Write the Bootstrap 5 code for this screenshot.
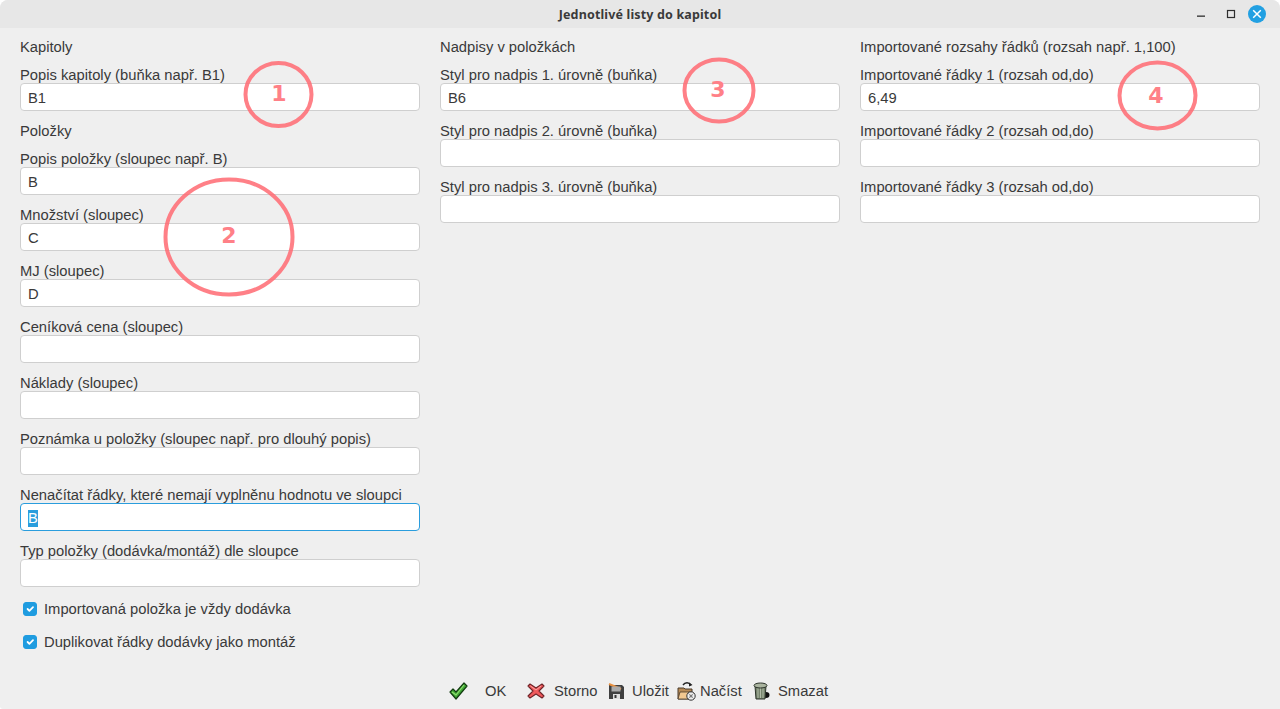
<!DOCTYPE html>
<html lang="cs">
<head>
<meta charset="utf-8">
<title>Jednotlivé listy do kapitol</title>
<link href="https://cdn.jsdelivr.net/npm/bootstrap@5.3.0/dist/css/bootstrap.min.css" rel="stylesheet">
<style>
html,body{height:709px;overflow:hidden;background:#fff}
body{font-family:"Liberation Sans",Arial,sans-serif;font-size:14.76px;color:#3a3a3a;line-height:16px}
.win{height:709px;background:#efefef;border-top-right-radius:8px;border-top-left-radius:8px;border-bottom-left-radius:3px;overflow:hidden;position:relative}
.tbar{height:28px;background:#e7e7e7;position:relative}
.ttl{font-family:"Noto Sans",sans-serif;font-weight:700;font-size:12.5px;line-height:30px;color:#3a3a3a;letter-spacing:.15px}
.ctl{position:absolute;top:0;right:0;height:28px}
.form-wrap{padding:11px 20px 0;flex:1 1 auto}
.form-row{--bs-gutter-x:20px;--bs-gutter-y:0}
.cap{height:16px;line-height:16px;white-space:nowrap;display:block;margin:0}
.fld{margin-bottom:12px}
.inp.form-control{height:28px;min-height:28px;padding:1px 7px 0;font-size:14.76px;line-height:26px;border:1px solid #cfcfcf;border-radius:4px;color:#3a3a3a;background:#fff;box-shadow:none;display:block}
.inp.foc{border-color:#2a9ddd;padding-top:0}
.sel{background:#2a9ddd;color:#fff;display:inline-block;line-height:17px;height:17px;vertical-align:top;margin-top:6px}
.chk{display:flex;align-items:center;min-height:16px;margin:0;padding:0 0 0 3px;gap:7px}
.chk .form-check-input{width:14px;height:14px;margin:0;float:none;border-radius:3px;background-color:#1f9ce0;border-color:#1f9ce0;flex:none}
.chk-a{margin-top:14px}
.chk-b{margin-top:17px}
.fbar{height:38px;display:flex;align-items:center;padding-left:449px;padding-top:2px;position:absolute;left:0;right:0;bottom:0}
.fbtn{display:flex;align-items:center;white-space:nowrap}
.fbtn svg{display:block;flex:none}
.ring{position:absolute;pointer-events:none}
.ring-n{position:absolute;font-family:"DejaVu Sans",sans-serif;font-weight:700;font-size:22px;line-height:24px;color:#ff8087;transform:translate(-50%,-50%)}
</style>
</head>
<body>
<div class="win d-flex flex-column">
  <div class="tbar text-center">
    <div class="ttl">Jednotlivé listy do kapitol</div>
    <svg class="ctl" width="100" height="28" viewBox="0 0 100 28">
      <rect x="17" y="15.5" width="8" height="1.3" fill="#2e2e2e"/>
      <rect x="47.5" y="10.5" width="7" height="7" fill="none" stroke="#2e2e2e" stroke-width="1.2"/>
      <circle cx="77" cy="14" r="9" fill="#22a0e2"/>
      <path d="M73.2 10.2l7.6 7.6M80.8 10.2l-7.6 7.6" stroke="#fff" stroke-width="1.5"/>
    </svg>
  </div>
  <div class="form-wrap">
    <div class="row form-row">
      <div class="col-4">
        <div class="cap fld">Kapitoly</div>
        <div class="fld"><label class="cap">Popis kapitoly (buňka např. B1)</label><input class="form-control inp" value="B1"></div>
        <div class="cap fld">Položky</div>
        <div class="fld"><label class="cap">Popis položky (sloupec např. B)</label><input class="form-control inp" value="B"></div>
        <div class="fld"><label class="cap">Množství (sloupec)</label><input class="form-control inp" value="C"></div>
        <div class="fld"><label class="cap">MJ (sloupec)</label><input class="form-control inp" value="D"></div>
        <div class="fld"><label class="cap">Ceníková cena (sloupec)</label><input class="form-control inp"></div>
        <div class="fld"><label class="cap">Náklady (sloupec)</label><input class="form-control inp"></div>
        <div class="fld"><label class="cap">Poznámka u položky (sloupec např. pro dlouhý popis)</label><input class="form-control inp"></div>
        <div class="fld"><label class="cap">Nenačítat řádky, které nemají vyplněnu hodnotu ve sloupci</label><div class="form-control inp foc"><span class="sel">B</span></div></div>
        <div class="fld"><label class="cap">Typ položky (dodávka/montáž) dle sloupce</label><input class="form-control inp"></div>
        <div class="form-check chk chk-a"><input class="form-check-input" type="checkbox" checked><label class="form-check-label">Importovaná položka je vždy dodávka</label></div>
        <div class="form-check chk chk-b"><input class="form-check-input" type="checkbox" checked><label class="form-check-label">Duplikovat řádky dodávky jako montáž</label></div>
      </div>
      <div class="col-4">
        <div class="cap fld">Nadpisy v položkách</div>
        <div class="fld"><label class="cap">Styl pro nadpis 1. úrovně (buňka)</label><input class="form-control inp" value="B6"></div>
        <div class="fld"><label class="cap">Styl pro nadpis 2. úrovně (buňka)</label><input class="form-control inp"></div>
        <div class="fld"><label class="cap">Styl pro nadpis 3. úrovně (buňka)</label><input class="form-control inp"></div>
      </div>
      <div class="col-4">
        <div class="cap fld">Importované rozsahy řádků (rozsah např. 1,100)</div>
        <div class="fld"><label class="cap">Importované řádky 1 (rozsah od,do)</label><input class="form-control inp" value="6,49"></div>
        <div class="fld"><label class="cap">Importované řádky 2 (rozsah od,do)</label><input class="form-control inp"></div>
        <div class="fld"><label class="cap">Importované řádky 3 (rozsah od,do)</label><input class="form-control inp"></div>
      </div>
    </div>
  </div>
  <div class="fbar">
    <div class="fbtn" style="width:78px"><svg width="20" height="18" viewBox="0 0 20 18" style="margin-right:16px"><path d="M1 10l3-3 3 3 8-9 3 3-11 13z" fill="#3fa835" stroke="#123c10" stroke-width="1.2" stroke-linejoin="round"/><path d="M3 10l4 3 8-10" fill="none" stroke="#8fdc6e" stroke-width="1.2"/></svg><span>OK</span></div>
    <div class="fbtn" style="width:81px"><svg width="18" height="16" viewBox="0 0 18 16" style="margin-right:9px"><path d="M1 3l2-2 6 4 6-4 2 2-5 5 5 5-2 2-6-4-6 4-2-2 5-5z" fill="#f0595c" stroke="#6e2428" stroke-width="1.1" stroke-linejoin="round"/><path d="M3.5 3l5.5 4 5-4" fill="none" stroke="#ffa5a0" stroke-width="1"/></svg><span>Storno</span></div>
    <div class="fbtn" style="width:69px"><svg width="17" height="17" viewBox="0 0 17 17" style="margin-right:7px"><path d="M1 2h13l2 2v12H1z" fill="#3f3f3f"/><path d="M1 1l12 5" stroke="#e89040" stroke-width="2"/><rect x="3.5" y="3.500" width="9" height="5" fill="#aaa"/><rect x="5" y="11" width="7" height="5" fill="#ddd"/><rect x="6.500" y="12" width="2" height="3" fill="#333"/></svg><span>Uložit</span></div>
    <div class="fbtn" style="width:75px"><svg width="19" height="20" viewBox="0 0 19 20" style="margin-right:4px"><path d="M6 4c2-3 6-3 8 0" fill="none" stroke="#222" stroke-width="1.4"/><path d="M12 1.500l3.500 2.500-3.500 1.500z" fill="#222"/><path d="M1 7h6l1 1h7v10H1z" fill="#b78a55" stroke="#4a3a2a"/><path d="M1 18l2-7h12l-2 7z" fill="#f2c890" stroke="#4a3a2a" stroke-width=".8"/><circle cx="14" cy="15" r="4.200" fill="#eee" stroke="#333"/><circle cx="14" cy="15" r="1.500" fill="#888"/><path d="M11.500 12.500l5 5M16.500 12.500l-5 5" stroke="#777" stroke-width=".7"/></svg><span>Načíst</span></div>
    <div class="fbtn"><svg width="18" height="18" viewBox="0 0 18 18" style="margin-right:8px"><ellipse cx="14" cy="13" rx="3.500" ry="3" fill="#111"/><path d="M3 4h11l-1 13H4z" fill="#75836c" stroke="#2c332a"/><path d="M6 6v10M8.500 6v10M11 6v10" stroke="#b2bca8" stroke-width="1"/><ellipse cx="8.500" cy="3.500" rx="6.500" ry="2.500" fill="#aab49f" stroke="#2c332a"/></svg><span>Smazat</span></div>
  </div>

  <svg class="ring" style="left:243px;top:60px" width="71" height="69" viewBox="0 0 71 69"><ellipse cx="35.500" cy="34.500" rx="33" ry="31.500" fill="none" stroke="#ff6a72" stroke-opacity=".85" stroke-width="4"/></svg>
  <span class="ring-n" style="left:279px;top:94px">1</span>
  <svg class="ring" style="left:163px;top:177px" width="132" height="120" viewBox="0 0 132 120"><ellipse cx="66" cy="60" rx="63.500" ry="57.500" fill="none" stroke="#ff6a72" stroke-opacity=".85" stroke-width="4"/></svg>
  <span class="ring-n" style="left:229px;top:236px">2</span>
  <svg class="ring" style="left:682px;top:57px" width="74" height="67" viewBox="0 0 74 67"><ellipse cx="37" cy="33.500" rx="34.500" ry="31" fill="none" stroke="#ff6a72" stroke-opacity=".85" stroke-width="4"/></svg>
  <span class="ring-n" style="left:718px;top:90px">3</span>
  <svg class="ring" style="left:1117px;top:60px" width="81" height="71" viewBox="0 0 81 71"><ellipse cx="40.500" cy="35.500" rx="38" ry="33" fill="none" stroke="#ff6a72" stroke-opacity=".85" stroke-width="4"/></svg>
  <span class="ring-n" style="left:1156px;top:96px">4</span>
</div>
</body>
</html>
